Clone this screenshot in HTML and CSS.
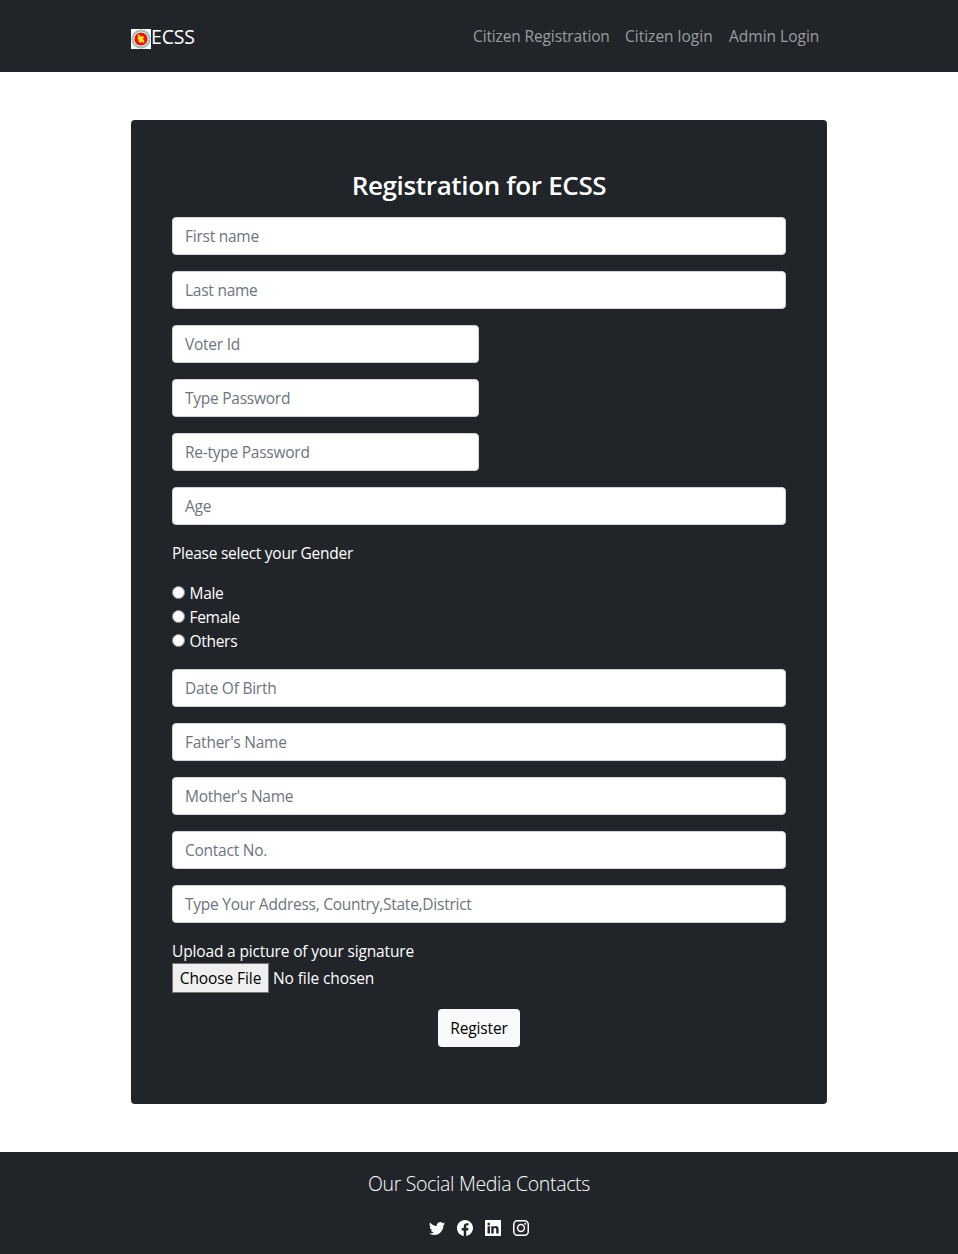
FILE: index.html
```html
<!DOCTYPE html>
<html lang="en">
<head>
<meta charset="utf-8">
<title>ECSS</title>
<link rel="stylesheet" href="styles.css">
</head>
<body>
<header class="navbar">
  <a class="brand">
    <svg class="brand-logo" width="20" height="20" viewBox="0 0 20 20">
      <rect width="20" height="20" fill="#fff"/>
      <circle cx="10" cy="10" r="8.6" fill="none" stroke="#8db59c" stroke-width="2"/>
      <circle cx="10" cy="10" r="8.8" fill="none" stroke="#e4ece4" stroke-width="1" stroke-dasharray="1 1.5"/>
      <circle cx="10" cy="10" r="6.6" fill="#f10f13"/>
      <path d="M7 5.5l1.6 1 .6 1.3 3-.4.5 1.5-1.2 1 1.3 1.2.2 3-1-.9-.7-1.1-1.2 1.4-2-.6-.5-2.4-1-1.2.8-1z" fill="#ffe619" stroke="#ffe619" stroke-width=".5"/>
    </svg><span class="brand-name">ECSS</span>
  </a>
  <nav class="nav">
    <a class="nav-link nav-registration">Citizen Registration</a>
    <a class="nav-link nav-citizen">Citizen login</a>
    <a class="nav-link nav-admin">Admin Login</a>
  </nav>
</header>
<main class="content">
  <form class="card">
    <h2 class="title">Registration for ECSS</h2>
    <input class="field" type="text" placeholder="First name">
    <input class="field" type="text" placeholder="Last name">
    <input class="field half" type="text" placeholder="Voter Id">
    <input class="field half" type="password" placeholder="Type Password">
    <input class="field half" type="password" placeholder="Re-type Password">
    <input class="field" type="text" placeholder="Age">
    <p class="gender-label">Please select your Gender</p>
    <div class="radios">
      <label class="option"><input class="radio" type="radio" name="gender">Male</label>
      <label class="option"><input class="radio" type="radio" name="gender">Female</label>
      <label class="option"><input class="radio" type="radio" name="gender">Others</label>
    </div>
    <input class="field" type="text" placeholder="Date Of Birth">
    <input class="field" type="text" placeholder="Father's Name">
    <input class="field" type="text" placeholder="Mother's Name">
    <input class="field" type="text" placeholder="Contact No.">
    <input class="field" type="text" placeholder="Type Your Address, Country,State,District">
    <label class="upload-label" for="signature">Upload a picture of your signature</label>
    <input class="file" id="signature" type="file">
    <button class="register" type="button">Register</button>
  </form>
</main>
<footer class="footer">
  <p class="footer-title">Our Social Media Contacts</p>
  <div class="social">
    <svg class="icon" viewBox="0 0 16 16"><path d="M5.026 15c6.038 0 9.341-5.003 9.341-9.334 0-.14 0-.282-.006-.422A6.685 6.685 0 0 0 16 3.542a6.658 6.658 0 0 1-1.889.518 3.301 3.301 0 0 0 1.447-1.817 6.533 6.533 0 0 1-2.087.793A3.286 3.286 0 0 0 7.875 6.03a9.325 9.325 0 0 1-6.767-3.429 3.289 3.289 0 0 0 1.018 4.382A3.323 3.323 0 0 1 .64 6.575v.045a3.288 3.288 0 0 0 2.632 3.218 3.203 3.203 0 0 1-.865.115 3.23 3.23 0 0 1-.614-.057 3.283 3.283 0 0 0 3.067 2.277A6.588 6.588 0 0 1 .78 13.58a6.32 6.32 0 0 1-.78-.045A9.344 9.344 0 0 0 5.026 15z"/></svg>
    <svg class="icon" viewBox="0 0 16 16"><path d="M16 8.049c0-4.446-3.582-8.05-8-8.05C3.58 0-.002 3.603-.002 8.05c0 4.017 2.926 7.347 6.75 7.951v-5.625h-2.03V8.05H6.75V6.275c0-2.017 1.195-3.131 3.022-3.131.876 0 1.791.157 1.791.157v1.98h-1.009c-.993 0-1.303.621-1.303 1.258v1.51h2.218l-.354 2.326H9.25V16c3.824-.604 6.75-3.934 6.75-7.951z"/></svg>
    <svg class="icon" viewBox="0 0 16 16"><path fill-rule="evenodd" d="M.6 0h14.8a.6.6 0 0 1 .6.6v14.8a.6.6 0 0 1-.6.6H.6a.6.6 0 0 1-.6-.6V.6A.6.6 0 0 1 .6 0zM4.943 13.394V6.169H2.542v7.225zM3.743 5.182c.837 0 1.358-.554 1.358-1.248-.015-.709-.52-1.248-1.342-1.248-.822 0-1.359.54-1.359 1.248 0 .694.521 1.248 1.327 1.248zM6.271 13.394h2.401V9.359c0-.216.016-.432.08-.586.173-.431.568-.878 1.232-.878.869 0 1.216.662 1.216 1.634v3.865h2.401V9.25c0-2.22-1.184-3.252-2.764-3.252-1.274 0-1.845.7-2.165 1.193V6.169H6.271c.03.678 0 7.225 0 7.225z"/></svg>
    <svg class="icon outline" viewBox="0 0 16 16"><rect x=".75" y=".75" width="14.5" height="14.5" rx="3.7"/><circle cx="8" cy="8" r="3.4"/><circle class="dot" cx="12.25" cy="3.75" r="1"/></svg>
  </div>
</footer>
</body>
</html>
```
FILE: styles.css
```css
* { box-sizing: border-box; }
body {
  margin: 0;
  background: #fff;
  color: #fff;
  font-family: "Open Sans", "Noto Sans", sans-serif;
  font-size: 15.5px;
  line-height: 24px;
  letter-spacing: -0.25px;
}
.navbar {
  display: flex;
  justify-content: space-between;
  align-items: center;
  height: 72px;
  padding: 0 131px;
  background: #212529;
}
.brand { display: flex; align-items: center; height: 30px; padding-top: 6px; }
.brand-logo { display: block; }
.brand-name { padding-bottom: 4px; font-size: 19.5px; letter-spacing: -0.2px; }
.nav { display: flex; white-space: nowrap; color: #9b9d9f; letter-spacing: -0.13px; }
.nav-link { padding: 0 8px; }
.nav-registration { width: 152px; }
.nav-citizen { width: 104px; letter-spacing: 0; }
.nav-admin { width: 106px; letter-spacing: 0; }
.content { padding: 48px 131px; }
.card {
  display: flex;
  flex-direction: column;
  align-items: flex-start;
  height: 984px;
  padding: 48px 41px;
  border-radius: 4px;
  background: #212529;
}
.title {
  align-self: center;
  margin: 0 0 15px;
  font-size: 26px;
  font-weight: 600;
  line-height: 34px;
  letter-spacing: -0.35px;
}
.field {
  flex: none;
  width: 100%;
  height: 38px;
  margin: 0 0 16px;
  padding: 6px 12px;
  border: 1px solid #ced4da;
  border-radius: 4px;
  background: #fff;
  font: inherit;
  letter-spacing: inherit;
}
.half { width: 307px; }
.field::placeholder { color: #6c757d; opacity: 1; }
.gender-label { margin: 0 0 16px; }
.radios { margin-bottom: 16px; }
.option { display: flex; align-items: center; height: 24px; letter-spacing: -0.3px; }
.radio { width: 13px; height: 13px; margin: 0 4.5px 2px 0; }
.upload-label { letter-spacing: -0.15px; }
.file { height: 30px; margin: 0 0 16px; font: inherit; letter-spacing: -0.1px; }
.file::file-selector-button {
  height: 30px;
  width: 97px;
  margin: 0 4px 0 0;
  padding: 1px 6px;
  border: 1px solid #767676;
  background: #efefef;
  color: #000;
  font: inherit;
  letter-spacing: inherit;
}
.register {
  align-self: center;
  width: 82px;
  height: 38px;
  padding: 0;
  border: 0;
  border-radius: 4px;
  background: #f8f9fa;
  color: #000;
  font: inherit;
  letter-spacing: -0.15px;
}
.footer {
  display: flex;
  flex-direction: column;
  align-items: center;
  height: 102px;
  padding-top: 17px;
  background: #212529;
}
.footer-title { margin: 0 0 21px; font-size: 19.5px; font-weight: 300; line-height: 30px; letter-spacing: -0.33px; }
.social { display: flex; gap: 12.3px; }
.icon { width: 16px; height: 16px; fill: #fff; }
.outline { fill: none; stroke: #fff; stroke-width: 1.5; }
.dot { fill: #fff; stroke: none; }
```
